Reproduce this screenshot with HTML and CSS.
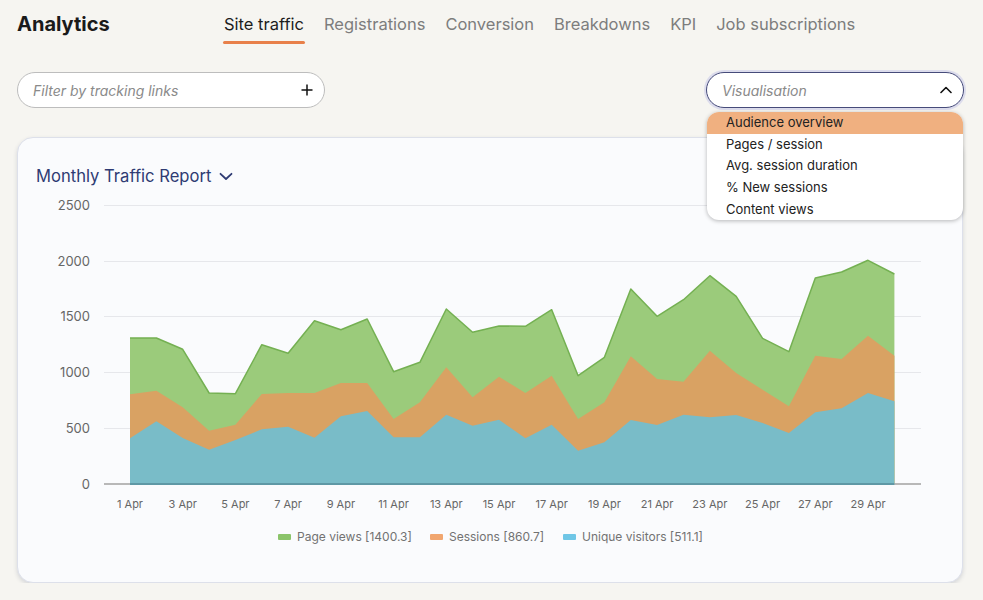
FILE: index.html
```html
<!DOCTYPE html>
<html lang="en">
<head>
<meta charset="utf-8">
<title>Analytics</title>
<link rel="stylesheet" href="styles.css">
</head>
<body>
<div class="page">
  <header class="header">
    <h1 class="title">Analytics</h1>
    <nav class="tabs">
      <a class="tab active">Site traffic</a>
      <a class="tab">Registrations</a>
      <a class="tab">Conversion</a>
      <a class="tab">Breakdowns</a>
      <a class="tab">KPI</a>
      <a class="tab">Job subscriptions</a>
    </nav>
  </header>

  <div class="controls">
    <div class="filter">
      <span class="placeholder">Filter by tracking links</span>
      <svg class="icon-plus" width="12" height="12" viewBox="0 0 12 12"><path d="M6 0.5V11.5M0.5 6H11.5" stroke="#111" stroke-width="1.5" fill="none"/></svg>
    </div>
    <div class="select-wrap">
      <div class="select">
        <span class="placeholder">Visualisation</span>
        <svg class="icon-chev" width="12" height="8" viewBox="0 0 12 8"><path d="M1 6.5L6 1.5L11 6.5" stroke="#111" stroke-width="1.6" fill="none" stroke-linecap="round" stroke-linejoin="round"/></svg>
      </div>
      <ul class="menu">
        <li class="menu-item active">Audience overview</li>
        <li class="menu-item">Pages / session</li>
        <li class="menu-item">Avg. session duration</li>
        <li class="menu-item">% New sessions</li>
        <li class="menu-item">Content views</li>
      </ul>
    </div>
  </div>

  <section class="card">
    <h2 class="card-title">Monthly Traffic Report
      <svg class="title-chev" width="14" height="9" viewBox="0 0 14 9"><path d="M1.5 1.8L7 7L12.5 1.8" stroke="#2f3b73" stroke-width="1.8" fill="none" stroke-linecap="round" stroke-linejoin="round"/></svg>
    </h2>
    <svg class="chart" width="944" height="393" viewBox="18 188 944 393">
      <g class="grid">
        <line x1="104" y1="206.5" x2="921" y2="206.5"/>
        <line x1="104" y1="262.5" x2="921" y2="262.5"/>
        <line x1="104" y1="317.5" x2="921" y2="317.5"/>
        <line x1="104" y1="373.5" x2="921" y2="373.5"/>
        <line x1="104" y1="429.5" x2="921" y2="429.5"/>
      </g>
      <g class="ylab">
        <text x="90" y="210.5">2500</text>
        <text x="90" y="266.5">2000</text>
        <text x="90" y="321.5">1500</text>
        <text x="90" y="377.5">1000</text>
        <text x="90" y="433.5">500</text>
        <text x="90" y="489.5">0</text>
      </g>
      <polygon class="area-green" points="130,485 130,339 156.4,339 182.7,350.3 209.1,394 235.4,394.7 261.8,345.7 288.1,354.3 314.5,321.7 340.9,330.7 367.2,320 393.6,372.7 419.9,363.3 446.3,310 472.6,333.3 499,327 525.4,327.3 551.7,310.7 578.1,376.7 604.4,358.3 630.8,290 657.1,317.3 683.5,300.7 709.9,276.7 736.2,297.3 762.6,339.3 788.9,352.7 815.3,279 841.6,273 868,261.3 894.4,275 894.4,485"/>
      <polyline class="line-green" points="130,339 156.4,339 182.7,350.3 209.1,394 235.4,394.7 261.8,345.7 288.1,354.3 314.5,321.7 340.9,330.7 367.2,320 393.6,372.7 419.9,363.3 446.3,310 472.6,333.3 499,327 525.4,327.3 551.7,310.7 578.1,376.7 604.4,358.3 630.8,290 657.1,317.3 683.5,300.7 709.9,276.7 736.2,297.3 762.6,339.3 788.9,352.7 815.3,279 841.6,273 868,261.3 894.4,275"/>
      <polygon class="area-orange" points="130,485 130,395.3 156.4,391.7 182.7,408.3 209.1,431.7 235.4,425.7 261.8,395 288.1,394 314.5,394 340.9,384 367.2,384 393.6,420 419.9,403.3 446.3,368.3 472.6,398.3 499,377.7 525.4,394 551.7,376.7 578.1,420 604.4,403.3 630.8,357.3 657.1,380 683.5,382.7 709.9,351.7 736.2,374 762.6,390.7 788.9,407.3 815.3,356.7 841.6,360 868,336.7 894.4,356.7 894.4,485"/>
      <polygon class="area-blue" points="130,485 130,439.3 156.4,422.3 182.7,439 209.1,450.7 235.4,441 261.8,430.3 288.1,427.7 314.5,438.7 340.9,417.3 367.2,412 393.6,438.3 419.9,438.3 446.3,415.7 472.6,426.7 499,420.7 525.4,439.3 551.7,425.7 578.1,451.7 604.4,443.3 630.8,421 657.1,426 683.5,415.7 709.9,418.3 736.2,416 762.6,424 788.9,434 815.3,413.3 841.6,409.3 868,394 894.4,402.3 894.4,485"/>
      <line class="axis" x1="104" y1="485" x2="921" y2="485"/>
      <line class="axis-blue" x1="130" y1="485" x2="894.4" y2="485"/>
      <g class="xlab">
        <text x="130" y="509">1 Apr</text>
        <text x="182.7" y="509">3 Apr</text>
        <text x="235.4" y="509">5 Apr</text>
        <text x="288.1" y="509">7 Apr</text>
        <text x="340.9" y="509">9 Apr</text>
        <text x="393.6" y="509">11 Apr</text>
        <text x="446.3" y="509">13 Apr</text>
        <text x="499" y="509">15 Apr</text>
        <text x="551.7" y="509">17 Apr</text>
        <text x="604.4" y="509">19 Apr</text>
        <text x="657.1" y="509">21 Apr</text>
        <text x="709.9" y="509">23 Apr</text>
        <text x="762.6" y="509">25 Apr</text>
        <text x="815.3" y="509">27 Apr</text>
        <text x="868" y="509">29 Apr</text>
      </g>
      <g class="legend">
        <rect class="sw-green" x="278" y="535" width="13" height="6" rx="1"/>
        <text x="297" y="541.5">Page views [1400.3]</text>
        <rect class="sw-orange" x="430" y="535" width="13" height="6" rx="1"/>
        <text x="449" y="541.5">Sessions [860.7]</text>
        <rect class="sw-blue" x="563" y="535" width="13" height="6" rx="1"/>
        <text x="582" y="541.5">Unique visitors [511.1]</text>
      </g>
    </svg>
  </section>
</div>
</body>
</html>
```

FILE: styles.css
```css
* { box-sizing: border-box; }

body {
  margin: 0;
  background: #f6f5f1;
  font-family: Inter, "Noto Sans", "Liberation Sans", sans-serif;
  color: #1d1d1d;
}

.page {
  padding: 13px 20px 0 17px;
}

.header {
  display: flex;
  align-items: flex-start;
}

.title {
  margin: 0;
  width: 207px;
  font-size: 20px;
  line-height: 22px;
  font-weight: 700;
  color: #1a1a1a;
}

.tabs {
  display: flex;
  gap: 20px;
}

.tab {
  position: relative;
  font-size: 16.5px;
  line-height: 22px;
  color: #7d7d7d;
  padding-bottom: 9px;
  cursor: pointer;
}

.tab.active {
  color: #1d1d1d;
}

.tab.active::after {
  content: "";
  position: absolute;
  left: -1px;
  right: -1px;
  bottom: 0;
  height: 3px;
  border-radius: 2px;
  background: #e8804a;
}

.controls {
  display: flex;
  justify-content: space-between;
  align-items: flex-start;
  margin-top: 28px;
}

.placeholder {
  font-style: italic;
  font-size: 14px;
  color: #8a8a8a;
}

.filter {
  width: 308px;
  height: 36px;
  border: 1px solid #bdbdbd;
  border-radius: 18px;
  background: #fff;
  display: flex;
  align-items: center;
  justify-content: space-between;
  padding: 0 11px 0 15px;
}

.select-wrap {
  position: relative;
  width: 258px;
  margin-right: -1px;
}

.select {
  height: 36px;
  border: 1.5px solid #464b7a;
  border-radius: 18px;
  box-shadow: 0 0 0 2px #dcdcec;
  background: #fff;
  display: flex;
  align-items: center;
  justify-content: space-between;
  padding: 0 11px 0 15px;
}

.icon-plus, .icon-chev, .title-chev {
  display: block;
  flex: none;
}

.menu {
  position: absolute;
  top: 40px;
  left: 1px;
  right: 1px;
  margin: 0;
  padding: 0;
  list-style: none;
  background: #fff;
  border-radius: 12px;
  box-shadow: 0 1px 4px rgba(0, 0, 0, 0.28);
  overflow: hidden;
  z-index: 10;
}

.menu-item {
  height: 21.7px;
  line-height: 21.7px;
  padding-left: 19px;
  font-size: 13px;
  color: #222;
}

.menu-item.active {
  background: #f0b080;
}

.card {
  margin-top: 29px;
  background: #fafbfd;
  border: 1px solid #dde0ea;
  border-radius: 16px;
  box-shadow: 0 2px 4px rgba(40, 50, 90, 0.16);
  padding-top: 27px;
  padding-bottom: 2px;
}

.card-title {
  margin: 0;
  padding-left: 18px;
  font-size: 16.6px;
  line-height: 22px;
  font-weight: 400;
  color: #2f3b73;
  display: flex;
  align-items: center;
  gap: 8px;
}

.chart {
  display: block;
  font-family: Inter, "Noto Sans", "Liberation Sans", sans-serif;
}

.grid line {
  stroke: #e6e7eb;
  stroke-width: 1;
}

.ylab text {
  font-size: 13px;
  fill: #666;
  text-anchor: end;
}

.xlab text {
  font-size: 11px;
  fill: #666;
  text-anchor: middle;
}

.legend text {
  font-size: 12px;
  fill: #727272;
}

.area-green { fill: #9bcb7b; }
.line-green { fill: none; stroke: #74b052; stroke-width: 1.5; stroke-linejoin: round; }
.area-orange { fill: #d9a263; }
.area-blue { fill: #79bcc8; }

.axis { stroke: #b8b8b8; stroke-width: 2; }
.axis-blue { stroke: #5e98a5; stroke-width: 2; }

.sw-green { fill: #8bc46a; }
.sw-orange { fill: #f1a66f; }
.sw-blue { fill: #6fc6e6; }
```
